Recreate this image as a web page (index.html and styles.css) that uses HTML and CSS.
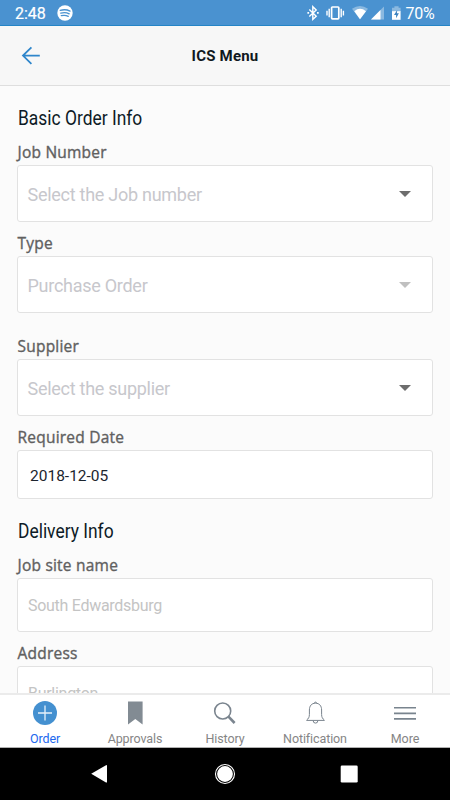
FILE: index.html
```html
<!DOCTYPE html>
<html lang="en">
<head>
<meta charset="utf-8">
<title>ICS Menu</title>
<link rel="stylesheet" href="styles.css">
</head>
<body>
<div class="screen">
  <div class="status">
    <span class="time">2:48</span>
    <svg class="spotify" width="16" height="16" viewBox="0 0 16 16"><circle cx="8" cy="8" r="7.7" fill="#fff"/><path d="M3.2 5.4Q8.5 3.8 13 6.1M3.8 8.2Q8.3 6.9 12.2 8.8M4.3 10.7Q8 9.7 11.3 11.3" fill="none" stroke="#4a92d0" stroke-width="1.3" stroke-linecap="round"/></svg>
    <svg class="indicators" width="98" height="26" viewBox="305 0 98 26">
      <path d="M309.3 9.6L316.2 16.2L312.8 19.3V6.7L316.2 9.9L309.3 16.4" fill="none" stroke="#fff" stroke-width="1.4"/>
      <path d="M307.4 12h1.7v1.8h-1.7zM317 12h1.7v1.8H317z" fill="#fff"/>
      <rect x="331.6" y="7" width="7.2" height="11.8" rx=".8" fill="none" stroke="#fff" stroke-width="1.7"/>
      <path d="M329.2 8.8v8.4M341.2 8.8v8.4M327 10.8v4.6M343.4 10.8v4.6" stroke="#fff" stroke-width="1.4"/>
      <path d="M352 8.7Q360 3.5 368 8.7L360 19.3z" fill="#8bb9e0"/>
      <path d="M354.3 11.2Q360 6.5 366 11.2L360 19.3z" fill="#fff"/>
      <path d="M371 19.6L384 6.5V19.6z" fill="#8bb9e0"/>
      <path d="M371 19.6L380.5 10V19.6z" fill="#fff"/>
      <path d="M392 7.7h2.4V6.2h4.2v1.5h2V12H392z" fill="#8bb9e0"/>
      <path d="M392 11.2h8.6v8.6H392z" fill="#fff"/>
      <path d="M397.2 10L394 15h2.1v3.3l2.8-5h-2z" fill="#3c83c0"/>
    </svg>
    <span class="percent">70%</span>
  </div>
  <header class="header">
    <svg class="back" width="20" height="20" viewBox="0 0 20 20"><path d="M18.8 9.6H2M10.4 1.4L2 9.6l8.4 8.2" fill="none" stroke="#2f86cb" stroke-width="1.8"/></svg>
    <h1 class="title">ICS Menu</h1>
  </header>
  <main class="form">
    <h2 class="section"><span>Basic Order Info</span></h2>
    <div class="field">
      <div class="label">Job Number</div>
      <div class="box select"><span>Select the Job number</span><i class="caret"></i></div>
    </div>
    <div class="field spaced">
      <div class="label">Type</div>
      <div class="box select disabled"><span>Purchase Order</span><i class="caret"></i></div>
    </div>
    <div class="field">
      <div class="label">Supplier</div>
      <div class="box select"><span>Select the supplier</span><i class="caret"></i></div>
    </div>
    <div class="field last">
      <div class="label">Required Date</div>
      <div class="box date"><span>2018-12-05</span></div>
    </div>
    <h2 class="section"><span>Delivery Info</span></h2>
    <div class="field">
      <div class="label">Job site name</div>
      <div class="box input"><span>South Edwardsburg</span></div>
    </div>
    <div class="field">
      <div class="label">Address</div>
      <div class="box input"><span>Burlington</span></div>
    </div>
  </main>
  <nav class="tabs">
    <div class="tab active">
      <svg width="26" height="26" viewBox="0 0 26 26"><circle cx="13" cy="13" r="12" fill="#4490d0"/><path d="M6 13h14M13 5.5v15" stroke="#e6f1fa" stroke-width="1.3"/></svg>
      <span>Order</span>
    </div>
    <div class="tab">
      <svg width="26" height="26" viewBox="0 0 26 26"><path d="M6 1.5h14.6v23L13.3 19 6 24.5z" fill="#828b93"/></svg>
      <span>Approvals</span>
    </div>
    <div class="tab">
      <svg width="26" height="26" viewBox="0 0 26 26"><circle cx="10.7" cy="11" r="8" fill="none" stroke="#7b858f" stroke-width="1.6"/><path d="M16.5 16.7L22.6 23" stroke="#7b858f" stroke-width="2.6"/></svg>
      <span>History</span>
    </div>
    <div class="tab">
      <svg width="26" height="26" viewBox="0 0 26 26"><path d="M13.5 3.2C9.5 3.2 7.4 6 7.4 10v4.5c0 2.8-1 4.2-2.7 5.5v.4h17.6V20c-1.7-1.3-2.7-2.7-2.7-5.5V10c0-4-2.1-6.8-6.1-6.8zM11.2 20.8a2.3 2.3 0 0 0 4.6 0M12.5 3.1a1 1 0 0 1 2 0" fill="none" stroke="#79838d" stroke-width="1"/></svg>
      <span>Notification</span>
    </div>
    <div class="tab">
      <svg width="26" height="26" viewBox="0 0 26 26"><path d="M2 7.8h22M2 13.4h22M2 18.9h22" stroke="#79848e" stroke-width="1.6"/></svg>
      <span>More</span>
    </div>
  </nav>
  <div class="system">
    <svg width="20" height="20" viewBox="0 0 20 20"><path d="M1.2 9.8L16 1.2Q17 .8 17 1.7V17.9Q17 18.8 16 18.4z" fill="#fff"/></svg>
    <svg width="22" height="22" viewBox="0 0 22 22"><circle cx="11" cy="11" r="9.5" fill="none" stroke="#fff" stroke-width="1.1"/><circle cx="11" cy="11" r="7.9" fill="#fff"/></svg>
    <svg width="20" height="20" viewBox="0 0 20 20"><rect x=".7" y="1.5" width="17" height="17" rx="1.3" fill="#fff"/></svg>
  </div>
</div>
</body>
</html>
```
FILE: styles.css
```css
* { box-sizing: border-box; }
body { margin: 0; font-family: Roboto, "Liberation Sans", sans-serif; }
svg { display: block; flex: none; }
.screen { width: 450px; height: 800px; display: flex; flex-direction: column; overflow: hidden; background: #fbfbfb; }
.status { flex: none; height: 26px; display: flex; align-items: center; padding-left: 15px; background: #4a92d0; border-bottom: 1px solid #2484c6; color: #fff; font-size: 16px; line-height: 26px; }
.time { width: 42px; padding-top: 3px; font-weight: 450; font-size: 16px; -webkit-text-stroke: .2px #fff; }
.indicators { margin-left: 232px; }
.percent { margin-left: 2.5px; padding-top: 3px; font-size: 16px; font-weight: 450; letter-spacing: -.3px; }
.header { flex: none; height: 60px; display: grid; grid-template-columns: 50px 1fr 50px; align-items: center; background: #f7f7f7; border-bottom: 1px solid #dedede; }
.back { margin-left: 21px; }
.title { margin: 0; text-align: center; font-size: 15px; font-weight: 700; color: #101820; line-height: 20px; padding-top: 1px; letter-spacing: .2px; }
.form { flex: 1; min-height: 0; overflow: hidden; padding: 20px 17px 0; }
.section { margin: 0 0 13px .5px; height: 24px; line-height: 24px; font-size: 20px; font-weight: 400; color: #0d1a26; }
.section span { display: inline-block; transform: scaleX(.87); transform-origin: left; }
.field { margin-bottom: 12px; }
.spaced { margin-bottom: 24px; }
.last { margin-bottom: 20px; }
.label { height: 18px; margin-bottom: 4px; padding-left: .5px; font: 400 15.5px/18px "Open Sans", "Noto Sans", sans-serif; letter-spacing: .22px; color: #606060; -webkit-text-stroke: .35px #606060; }
.box { display: flex; align-items: center; background: #fff; border: 1px solid #e2e2e2; border-radius: 3px; width: 416px; }
.select { height: 57px; justify-content: space-between; padding: 1px 21px 0 9.5px; font-size: 18px; letter-spacing: -.27px; color: #c7c7cc; }
.caret { border: 6px solid transparent; border-top-color: #6d6d6d; border-bottom: 0; }
.disabled .caret { border-top-color: #c0c0c0; }
.date { height: 49px; padding: 2px 0 0 12px; font-size: 15.5px; color: #1c252e; }
.input { height: 54px; padding: 1px 0 0 10px; font-size: 16px; letter-spacing: -.28px; color: #c4c4c4; }
.tabs { flex: none; height: 55px; display: grid; grid-template-columns: repeat(5, 1fr); background: #fff; border-top: 2px solid #ebebeb; border-bottom: 1px solid #b0b0b0; }
.tab { display: flex; flex-direction: column; align-items: center; padding-top: 5px; font-size: 12.5px; letter-spacing: -.1px; line-height: 16px; color: #858585; }
.tab span { margin-top: 5px; }
.active span { color: #2168ee; }
.system { flex: none; height: 52px; display: flex; align-items: center; justify-content: center; gap: 104px; background: #000; }
```
